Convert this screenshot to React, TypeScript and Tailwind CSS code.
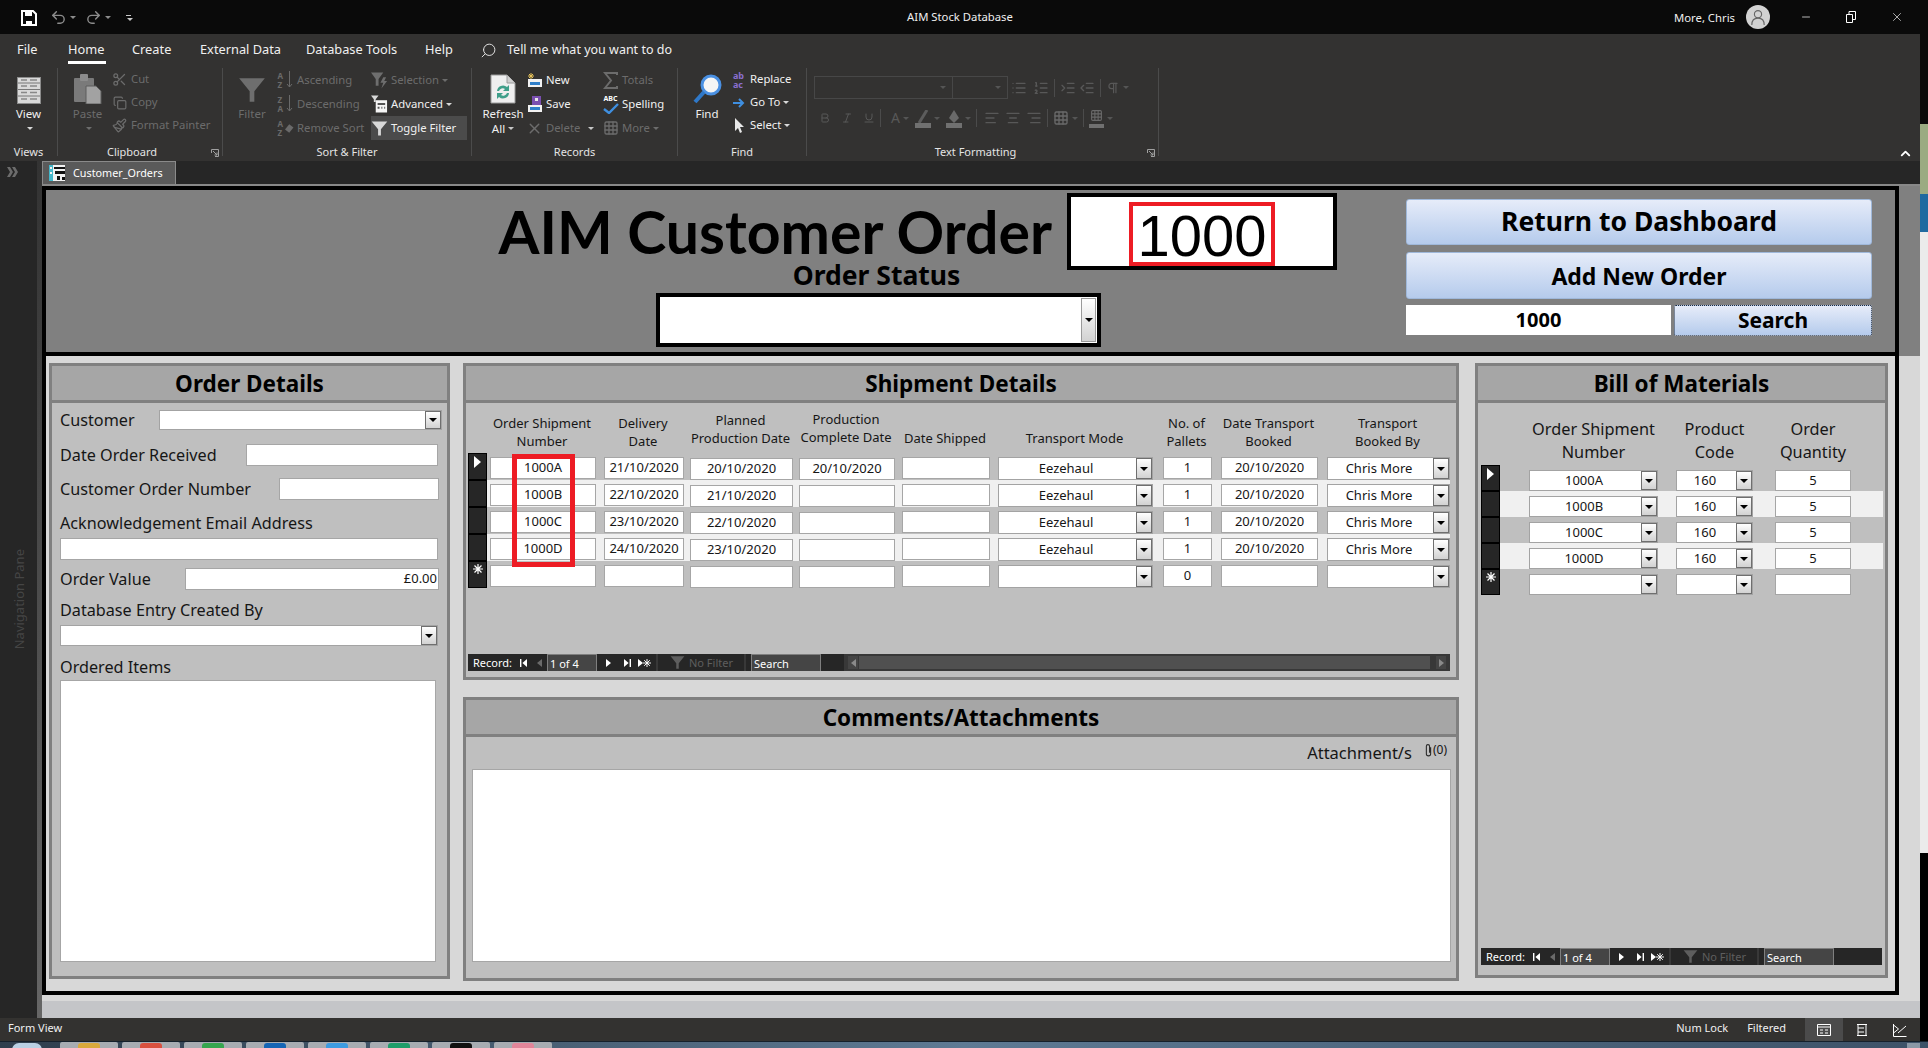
import {
  AlignCenter,
  AlignLeft,
  AlignRight,
  Bold,
  ChevronUp,
  Copy,
  Grid3x3,
  IndentDecrease,
  IndentIncrease,
  Italic,
  List,
  ListOrdered,
  Minus,
  Paintbrush,
  Pilcrow,
  Redo2,
  Scissors,
  Search as SearchIcon,
  Underline,
  Undo2,
  X,
} from 'lucide-react';
import type { ReactNode } from 'react';

// --- DATA ---
const tabs = ['File', 'Home', 'Create', 'External Data', 'Database Tools', 'Help'];

const tabClasses: Record<string, string> = {
  File: 'ml-[17px] w-[51px]',
  Home: 'w-[64px]',
  Create: 'w-[68px]',
  'External Data': 'w-[106px]',
  'Database Tools': 'w-[119px]',
  Help: 'w-[55px]',
};

const shipCols = [
  { head: ['Order Shipment', 'Number'], cls: 'ml-[3px] w-[106px]', pb: 'pb-[3px]' },
  { head: ['Delivery', 'Date'], cls: 'ml-[8px] w-[80px]', pb: 'pb-[3px]' },
  { head: ['Planned', 'Production Date'], cls: 'ml-[6px] w-[103px]', pb: 'pb-[6px]' },
  { head: ['Production', 'Complete Date'], cls: 'ml-[6px] w-[96px]', pb: 'pb-[7px]' },
  { head: ['Date Shipped'], cls: 'ml-[7px] w-[88px]', pb: 'pb-[6px]' },
  { head: ['Transport Mode'], cls: 'ml-[8px] w-[155px]', pb: 'pb-[6px]' },
  { head: ['No. of', 'Pallets'], cls: 'ml-[10px] w-[49px]', pb: 'pb-[3px]' },
  { head: ['Date Transport', 'Booked'], cls: 'ml-[9px] w-[97px]', pb: 'pb-[3px]' },
  { head: ['Transport', 'Booked By'], cls: 'ml-[9px] w-[123px]', pb: 'pb-[3px]' },
];

const shipRows = [
  { id: '1000A', delivery: '21/10/2020', planned: '20/10/2020', complete: '20/10/2020', mode: 'Eezehaul', pallets: '1', booked: '20/10/2020', by: 'Chris More' },
  { id: '1000B', delivery: '22/10/2020', planned: '21/10/2020', complete: '', mode: 'Eezehaul', pallets: '1', booked: '20/10/2020', by: 'Chris More' },
  { id: '1000C', delivery: '23/10/2020', planned: '22/10/2020', complete: '', mode: 'Eezehaul', pallets: '1', booked: '20/10/2020', by: 'Chris More' },
  { id: '1000D', delivery: '24/10/2020', planned: '23/10/2020', complete: '', mode: 'Eezehaul', pallets: '1', booked: '20/10/2020', by: 'Chris More' },
  { id: '', delivery: '', planned: '', complete: '', mode: '', pallets: '0', booked: '', by: '' },
];

const bomRows = [
  { id: '1000A', code: '160', qty: '5' },
  { id: '1000B', code: '160', qty: '5' },
  { id: '1000C', code: '160', qty: '5' },
  { id: '1000D', code: '160', qty: '5' },
  { id: '', code: '', qty: '' },
];

const taskIcons = [
  'bg-[#d9a93c]',
  'bg-[#d9503f]',
  'bg-[#36a64f]',
  'bg-[#1565b5]',
  'bg-[#3d9be0]',
  'bg-[#1f9d6a]',
  'bg-[#111111]',
  'bg-[#e2859a]',
];

// --- SMALL DRAWINGS ---
const Funnel = ({ className, color }: { className: string; color: string }) => (
  <svg viewBox="0 0 24 24" className={className}>
    <path d="M1 2h22L14 13v9h-4v-9z" fill={color} />
  </svg>
);

const Triangle = ({ className = 'fill-black' }: { className?: string }) => (
  <svg viewBox="0 0 8 4" className={`h-[4px] w-[8px] ${className}`}>
    <path d="M0 0h8L4 4z" />
  </svg>
);

const Caret = ({ className = 'fill-[#c8c8c8]' }: { className?: string }) => (
  <svg viewBox="0 0 6 3" className={`ml-[3px] inline h-[3px] w-[6px] shrink-0 ${className}`}>
    <path d="M0 0h6L3 3z" />
  </svg>
);

const StarGlyph = ({ className = 'stroke-white', size = 'h-[10px] w-[10px]' }: { className?: string; size?: string }) => (
  <svg viewBox="0 0 10 10" className={`${size} ${className}`} strokeWidth="1.2">
    <path d="M5 0v10M0 5h10M1.5 1.5l7 7M8.5 1.5l-7 7" />
  </svg>
);

const ViewIcon = () => (
  <svg viewBox="0 0 24 27" className="h-[27px] w-[24px]">
    <rect x="0.5" y="0.5" width="23" height="26" fill="#d9d9d9" stroke="#8c8c8c" />
    {[6, 12.5, 19].map((y) => (
      <path key={y} d={`M1 ${y}h22`} stroke="#777" />
    ))}
    {[3, 9, 15.5, 22].map((y) => (
      <path key={y} d={`M4 ${y}h6M13 ${y}h7`} stroke="#888" strokeWidth="1.5" />
    ))}
  </svg>
);

const PasteIcon = () => (
  <svg viewBox="0 0 29 31" className="h-[31px] w-[29px]">
    <rect x="1" y="5" width="20" height="24" rx="1" fill="#7a7a7a" />
    <rect x="7" y="1" width="8" height="7" rx="1" fill="#8c8c8c" />
    <path d="M13 13h10l5 5v13H13z" fill="#a2a2a2" stroke="#5c5c5c" />
  </svg>
);

const RefreshIcon = () => (
  <svg viewBox="0 0 26 30" className="h-[30px] w-[26px]">
    <path d="M1 1h16l8 8v20H1z" fill="#efefef" stroke="#9a9a9a" />
    <path d="M17 1v8h8" fill="#cfcfcf" stroke="#9a9a9a" />
    <path d="M7 17a6 6 0 0 1 10-4l2-2v6h-6l2-2a4 4 0 0 0-6 2zM19 19a6 6 0 0 1-10 4l-2 2v-6h6l-2 2a4 4 0 0 0 6-2z" fill="#3f9f8a" />
  </svg>
);

const NewIcon = () => (
  <svg viewBox="0 0 16 15" className="h-[15px] w-[16px]">
    <path d="M4 0v6M1 3h6M2 1l4 4M6 1L2 5" stroke="#e8c35a" />
    <rect x="1" y="6" width="14" height="8" fill="#f2f2f2" />
    <rect x="3" y="9" width="10" height="3" fill="#2f7fc9" />
  </svg>
);

const SaveSmallIcon = () => (
  <svg viewBox="0 0 16 17" className="h-[17px] w-[16px]">
    <rect x="5" y="0" width="9" height="11" fill="#7a4fb0" />
    <rect x="8" y="2" width="3" height="3" fill="#e8e8e8" />
    <rect x="1" y="9" width="14" height="7" fill="#f2f2f2" />
    <rect x="3" y="11" width="10" height="3" fill="#2f7fc9" />
  </svg>
);

const SigmaIcon = () => (
  <svg viewBox="0 0 15 17" className="h-[17px] w-[15px] fill-none stroke-[#6c6c6c]" strokeWidth="2">
    <path d="M14 3V1H2l6 7.5L2 16h12v-2" />
  </svg>
);

const SpellingIcon = () => (
  <div className="flex h-[19px] w-[16px] flex-col items-center">
    <span className="text-[7px] leading-[8px] font-bold text-white">ABC</span>
    <svg viewBox="0 0 16 11" className="h-[11px] w-[16px]">
      <path d="M1 6l5 4 9-9" fill="none" stroke="#3f8fe0" strokeWidth="2.4" />
    </svg>
  </div>
);

const FindIcon = () => (
  <svg viewBox="0 0 29 30" className="h-[30px] w-[29px]">
    <circle cx="18" cy="11" r="9" fill="#f5f5f5" stroke="#4a90e2" strokeWidth="3" />
    <path d="M11 18L2 28" stroke="#2f78c8" strokeWidth="4" />
  </svg>
);

const GoToIcon = () => (
  <svg viewBox="0 0 14 12" className="h-[12px] w-[14px]">
    <path d="M1 6h10M7 2l4 4-4 4" fill="none" stroke="#3f8fe0" strokeWidth="2" />
  </svg>
);

const CursorIcon = () => (
  <svg viewBox="0 0 12 16" className="h-[16px] w-[12px]">
    <path d="M2 0v13l3-3 2 5 2-1-2-5h4z" fill="#e8e8e8" />
  </svg>
);

const SelectionIcon = () => (
  <svg viewBox="0 0 18 18" className="h-[18px] w-[18px]">
    <path d="M0 1h13L8 8v7H5V8z" fill="#6e6e6e" />
    <path d="M13 6l-3 6h3l-2 6 6-8h-3l2-4z" fill="#6e6e6e" />
  </svg>
);

const AdvancedIcon = () => (
  <svg viewBox="0 0 18 18" className="h-[18px] w-[18px]">
    <path d="M0 0h8L5 4v3H3V4z" fill="#d8d8d8" />
    <rect x="5" y="5" width="12" height="13" fill="#f5f5f5" />
    <path d="M7 9h8M7 13h2M11 13h1M14 13h1" stroke="#555" strokeWidth="2" />
  </svg>
);

const SortIcon = ({ top, bottom }: { top: string; bottom: string }) => (
  <div className="flex h-[20px] w-[16px] items-center">
    <span className="flex w-[8px] flex-col text-[8px] leading-[9px] font-bold text-[#6a6a6a]">
      <span>{top}</span>
      <span>{bottom}</span>
    </span>
    <svg viewBox="0 0 7 18" className="h-[18px] w-[7px]">
      <path d="M3.5 0v16M1 13l2.5 3L6 13" fill="none" stroke="#6a6a6a" />
    </svg>
  </div>
);

const RemoveSortIcon = () => (
  <div className="flex h-[20px] w-[16px] items-center">
    <span className="flex w-[8px] flex-col text-[8px] leading-[9px] font-bold text-[#6a6a6a]">
      <span>A</span>
      <span>Z</span>
    </span>
    <svg viewBox="0 0 8 8" className="h-[9px] w-[9px]">
      <path d="M0 5l4-5 4 3-4 5z" fill="#6a6a6a" />
    </svg>
  </div>
);

const TabGlyph = () => (
  <svg viewBox="0 0 16 16" className="h-[16px] w-[16px]" shapeRendering="crispEdges">
    <rect width="16" height="16" fill="#f2f2f2" />
    <rect x="0" y="0" width="4" height="16" fill="#43b6c9" />
    <rect x="1" y="2" width="2" height="2" fill="#f2f2f2" />
    <rect x="1" y="7" width="2" height="2" fill="#f2f2f2" />
    <rect x="5" y="2" width="11" height="2" fill="#111" />
    <rect x="6" y="6" width="10" height="3" fill="#111" />
    <rect x="8" y="11" width="3" height="4" fill="#111" />
    <rect x="13" y="12" width="3" height="3" fill="#111" />
  </svg>
);

const NavFirst = ({ last = false }: { last?: boolean }) => (
  <svg viewBox="0 0 8 8" className={`h-[8px] w-[8px] fill-white ${last ? 'rotate-180' : ''}`}>
    <path d="M0 0h1.4v8H0zM7 0v8L2.4 4z" />
  </svg>
);

const NavArrow = ({ left = false, className = 'fill-white' }: { left?: boolean; className?: string }) => (
  <svg viewBox="0 0 5 8" className={`h-[8px] w-[5px] ${className} ${left ? 'rotate-180' : ''}`}>
    <path d="M0 0l5 4-5 4z" />
  </svg>
);

// --- FORM CONTROLS ---
const TextBox = ({ className, value = '', align = 'text-center' }: { className: string; value?: string; align?: string }) => (
  <div className={`flex items-center border border-[#a6a6a6] bg-white pb-[1px] text-[13px] leading-none text-[#161616] ${align} ${className}`}>
    <span className="w-full">{value}</span>
  </div>
);

const DropButton = ({ className }: { className: string }) => (
  <div className={`flex shrink-0 items-center justify-center border border-[#6f6f6f] bg-gradient-to-b from-[#ffffff] to-[#d2d2d2] ${className}`}>
    <Triangle />
  </div>
);

const Combo = ({ className, value = '' }: { className: string; value?: string }) => (
  <div className={`flex bg-[#a3a3a3] p-[1px] text-[13px] text-[#161616] ${className}`}>
    <div className="flex flex-1 items-center justify-center bg-white pr-[3px] pb-[1px] leading-none">{value}</div>
    <DropButton className="w-[16px]" />
  </div>
);

const RecordSelector = ({ kind }: { kind: 'current' | 'new' | 'none' }) => (
  <div className="flex w-[19px] shrink-0 justify-center border border-black bg-[#262626] pt-[2px]">
    {kind === 'current' && (
      <svg viewBox="0 0 7 12" className="h-[12px] w-[7px] fill-white">
        <path d="M0 0l7 6-7 6z" />
      </svg>
    )}
    {kind === 'new' && <StarGlyph />}
  </div>
);

const RecordBar = ({ scroll = false }: { scroll?: boolean }) => (
  <div className={`flex h-[17px] items-center bg-[#262626] pl-[5px] text-[11px] leading-none text-white ${scroll ? 'w-[982px]' : 'w-[401px]'}`}>
    <span className="w-[44px] shrink-0">Record:</span>
    <span className="flex w-[14px] shrink-0 justify-center"><NavFirst /></span>
    <span className="flex w-[16px] shrink-0 justify-center"><NavArrow left className="fill-[#6a6a6a]" /></span>
    <span className="flex h-full w-[50px] shrink-0 items-center border-x border-t border-[#7f7f7f] bg-[#454545] pl-[2px]">1 of 4</span>
    <span className="flex w-[22px] shrink-0 justify-center"><NavArrow /></span>
    <span className="flex w-[16px] shrink-0 justify-center"><NavFirst last /></span>
    <span className="flex w-[18px] shrink-0 items-center justify-center">
      <NavArrow />
      <StarGlyph size="h-[8px] w-[8px]" />
    </span>
    <span className="ml-[3px] flex h-full w-[90px] shrink-0 items-center border-x-2 border-[#383838] pl-[12px] text-[#5e5e5e]">
      <Funnel className="h-[15px] w-[15px] shrink-0" color="#5e5e5e" />
      <span className="ml-[4px]">No Filter</span>
    </span>
    <span className="ml-[5px] flex h-full w-[70px] shrink-0 items-center border-x border-t border-[#7f7f7f] bg-[#454545] pl-[2px]">Search</span>
    {scroll && (
      <div className="ml-[23px] flex h-full flex-1 items-center bg-[#383838] px-[4px]">
        <span className="flex h-[13px] w-[10px] items-center justify-center bg-[#454545]"><NavArrow left className="fill-[#8a8a8a]" /></span>
        <span className="mx-[1px] h-[13px] flex-1 bg-[#505050]" />
        <span className="ml-[5px] flex h-[13px] w-[10px] items-center justify-center bg-[#454545]"><NavArrow className="fill-[#8a8a8a]" /></span>
      </div>
    )}
  </div>
);

const Panel = ({ title, className, children }: { title: string; className: string; children: ReactNode }) => (
  <section className={`flex flex-col border-[3px] border-[#808080] ${className}`}>
    <h2 className="h-[37px] shrink-0 border-b-[3px] border-[#808080] bg-[#a6a6a6] text-center text-[22.5px] leading-[35px] font-bold text-black">
      {title}
    </h2>
    <div className="flex min-h-0 flex-1 flex-col bg-[#bfbfbf]">{children}</div>
  </section>
);

// --- RIBBON ---
const Group = ({ label, className, labelClass = '', launcher = false, children }: { label: string; className: string; labelClass?: string; launcher?: boolean; children: ReactNode }) => (
  <div className={`relative flex h-[88px] shrink-0 flex-col border-r border-[#4b4b4b] ${className}`}>
    <div className="flex h-[72px] shrink-0">{children}</div>
    <div className={`mt-[4px] shrink-0 text-center text-[11px] leading-[16px] text-[#e4e4e4] ${labelClass}`}>{label}</div>
    {launcher && (
      <svg viewBox="0 0 8 8" className="absolute right-[3px] bottom-[-1px] h-[8px] w-[8px] stroke-[#a0a0a0]" fill="none">
        <path d="M.5 4V.5H7.5V7.5H4M2 2l4 4M6 3.5V6H3.5" />
      </svg>
    )}
  </div>
);

const BigButton = ({ icon, label, className, tone = 'text-[#f0f0f0]', extra }: { icon: ReactNode; label: string; className: string; tone?: string; extra?: ReactNode }) => (
  <div className={`flex flex-col items-center pt-[4px] text-[11.5px] leading-[15px] ${tone} ${className}`}>
    <div className="flex h-[32px] items-end">{icon}</div>
    <span className="mt-[2px]">{label}</span>
    {extra}
  </div>
);

const SmallButton = ({ icon, label, className = '', on = false, caret = false, tight = false }: { icon: ReactNode; label: string; className?: string; on?: boolean; caret?: boolean; tight?: boolean }) => (
  <div className={`flex items-center whitespace-nowrap text-[11.3px] ${tight ? 'h-[23px]' : 'h-[24px]'} ${on ? 'text-[#f0f0f0]' : 'text-[#6c6c6c]'} ${className}`}>
    <span className="mr-[3px] flex w-[17px] shrink-0 justify-center">{icon}</span>
    {label}
    {caret && <Caret className={on ? 'fill-[#d8d8d8]' : 'fill-[#6c6c6c]'} />}
  </div>
);

const Sep = () => <span className="mx-[5px] h-[18px] w-px bg-[#4b4b4b]" />;

const Ribbon = () => (
  <div className="h-[127px] shrink-0 bg-[#333231]">
    <div className="flex h-[34px] items-center pb-[2px] text-[12.8px] text-[#f0f0f0]">
      {tabs.map((tab) => (
        <div key={tab} className={`relative ${tabClasses[tab]}`}>
          {tab}
          {tab === 'Home' && <span className="absolute top-[21px] left-0 h-[3px] w-[38px] bg-white" />}
        </div>
      ))}
      <SearchIcon className="h-[17px] w-[17px] -scale-x-100 text-[#e0e0e0]" strokeWidth={1.4} />
      <span className="ml-[10px] text-[12.5px]">Tell me what you want to do</span>
    </div>
    <div className="relative flex">
      <Group label="Views" className="w-[58px]">
        <BigButton
          className="w-full"
          icon={<ViewIcon />}
          label="View"
          extra={<Caret className="mt-[6px] ml-0 fill-[#d8d8d8]" />}
        />
      </Group>
      <Group label="Clipboard" labelClass="pr-[16px]" launcher className="w-[165px]">
        <BigButton
          className="ml-[8px] w-[43px]"
          tone="text-[#6c6c6c]"
          icon={<PasteIcon />}
          label="Paste"
          extra={<Caret className="mt-[6px] ml-0 fill-[#6c6c6c]" />}
        />
        <div className="ml-[2px] flex flex-col">
          <SmallButton tight icon={<Scissors className="h-[15px] w-[15px]" />} label="Cut" />
          <SmallButton tight icon={<Copy className="h-[14px] w-[14px]" />} label="Copy" />
          <SmallButton tight icon={<Paintbrush className="h-[15px] w-[15px]" />} label="Format Painter" />
        </div>
      </Group>
      <Group label="Sort & Filter" className="w-[249px]">
        <BigButton
          className="ml-[12px] w-[34px]"
          tone="text-[#6c6c6c]"
          icon={<Funnel className="h-[28px] w-[28px]" color="#6e6e6e" />}
          label="Filter"
        />
        <div className="ml-[8px] flex w-[94px] flex-col">
          <SmallButton icon={<SortIcon top="A" bottom="Z" />} label="Ascending" />
          <SmallButton icon={<SortIcon top="Z" bottom="A" />} label="Descending" />
          <SmallButton icon={<RemoveSortIcon />} label="Remove Sort" />
        </div>
        <div className="flex flex-col">
          <SmallButton icon={<SelectionIcon />} label="Selection" caret />
          <SmallButton on icon={<AdvancedIcon />} label="Advanced" caret />
          <SmallButton on className="w-[96px] bg-[#4b4b4b]" icon={<Funnel className="h-[17px] w-[17px]" color="#d8d8d8" />} label="Toggle Filter" />
        </div>
      </Group>
      <Group label="Records" className="w-[206px]">
        <BigButton
          className="ml-[11px] w-[40px]"
          icon={<RefreshIcon />}
          label="Refresh"
          extra={<span className="flex items-center">All<Caret /></span>}
        />
        <div className="ml-[3px] flex w-[75px] flex-col">
          <SmallButton on icon={<NewIcon />} label="New" />
          <SmallButton on icon={<SaveSmallIcon />} label="Save" />
          <div className="flex items-center">
            <SmallButton icon={<X className="h-[17px] w-[17px]" />} label="Delete" />
            <Caret className="ml-[8px] fill-[#c8c8c8]" />
          </div>
        </div>
        <div className="ml-[1px] flex flex-col">
          <SmallButton icon={<SigmaIcon />} label="Totals" />
          <SmallButton on icon={<SpellingIcon />} label="Spelling" />
          <SmallButton icon={<Grid3x3 className="h-[16px] w-[16px]" />} label="More" caret />
        </div>
      </Group>
      <Group label="Find" className="w-[129px]">
        <BigButton className="ml-[9px] w-[40px]" icon={<FindIcon />} label="Find" />
        <div className="ml-[3px] flex flex-col">
          <SmallButton tight on icon={<span className="text-[9px] leading-[9px] font-bold text-[#8a6fd0]">ab<br />ac</span>} label="Replace" />
          <SmallButton tight on icon={<GoToIcon />} label="Go To" caret />
          <SmallButton tight on icon={<CursorIcon />} label="Select" caret />
        </div>
      </Group>
      <Group label="Text Formatting" labelClass="pr-[14px]" launcher className="w-[352px]">
        <div className="ml-[7px] flex flex-col text-[#585858]">
          <div className="mt-[8px] flex items-center">
            <span className="flex h-[23px] w-[139px] items-center justify-end border border-[#474747] pr-[6px]"><Caret className="fill-[#555555]" /></span>
            <span className="flex h-[23px] w-[55px] items-center justify-end border-y border-r border-[#474747] pr-[6px]"><Caret className="fill-[#555555]" /></span>
            <List className="ml-[3px] h-[16px] w-[16px]" />
            <ListOrdered className="ml-[6px] h-[16px] w-[16px]" />
            <Sep />
            <IndentIncrease className="h-[16px] w-[16px]" />
            <IndentDecrease className="ml-[3px] h-[16px] w-[16px]" />
            <Sep />
            <Pilcrow className="h-[14px] w-[14px]" />
            <Caret className="fill-[#555555]" />
          </div>
          <div className="mt-[9px] flex items-center">
            <Bold className="ml-[5px] h-[12px] w-[12px]" />
            <Italic className="ml-[10px] h-[12px] w-[12px]" />
            <Underline className="ml-[10px] h-[12px] w-[12px]" />
            <Sep />
            <span className="ml-[5px] text-[14px] leading-none">A</span>
            <Caret className="fill-[#555555]" />
            <span className="ml-[6px] flex h-[20px] w-[16px] flex-col justify-end">
              <svg viewBox="0 0 16 13" className="h-[13px] w-[16px] stroke-[#5c5c5c]"><path d="M4 13L12 0" strokeWidth="3" /></svg>
              <span className="h-[5px] bg-[#707070]" />
            </span>
            <Caret className="fill-[#555555]" />
            <span className="ml-[6px] flex h-[20px] w-[16px] flex-col justify-end">
              <svg viewBox="0 0 16 13" className="h-[13px] w-[16px] fill-[#6a6a6a]"><path d="M8 0l5 8-5 5-5-5z" /></svg>
              <span className="h-[5px] bg-[#707070]" />
            </span>
            <Caret className="fill-[#555555]" />
            <Sep />
            <AlignLeft className="ml-[2px] h-[16px] w-[16px]" />
            <AlignCenter className="ml-[5px] h-[16px] w-[16px]" />
            <AlignRight className="ml-[5px] h-[16px] w-[16px]" />
            <Sep />
            <Grid3x3 className="h-[18px] w-[16px] text-[#6a6a6a]" />
            <Caret className="fill-[#555555]" />
            <Sep />
            <span className="flex h-[20px] w-[15px] flex-col justify-end">
              <Grid3x3 className="h-[13px] w-[15px] text-[#6a6a6a]" />
              <span className="mt-[2px] h-[4px] bg-[#707070]" />
            </span>
            <Caret className="fill-[#555555]" />
          </div>
        </div>
      </Group>
      <ChevronUp className="absolute top-[78px] left-[1898px] h-[15px] w-[15px] text-white" strokeWidth={3} />
    </div>
  </div>
);

// --- FORM SECTIONS ---
const FormHeader = () => (
  <div className="h-[170px] shrink-0 bg-[#808080]">
    <div className="flex h-full w-[1857px] border-4 border-black">
      <div className="flex w-[1291px] flex-col">
        <div className="flex h-[80px] items-start justify-end pt-[3px]">
          <h1 className="mt-[12px] mr-[15px] font-['Lato',sans-serif] text-[59px] leading-[54px] font-bold whitespace-nowrap text-black">AIM Customer Order</h1>
          <div className="flex h-[77px] w-[270px] items-center justify-center border-4 border-black bg-white">
            <span className="mt-[5px] flex h-[64px] w-[146px] items-center justify-center border-4 border-[#ed1c24] pt-[3px] font-['Liberation_Sans',sans-serif] text-[58px] leading-none text-black">
              1000
            </span>
          </div>
        </div>
        <div className="mt-[-10px] ml-[610px] flex w-[445px] flex-col items-center">
          <div className="h-[33px] pr-[4px] text-[26.5px] leading-[30px] font-bold text-black">Order Status</div>
          <div className="flex h-[54px] w-full justify-end border-4 border-black bg-white p-[1px]">
            <DropButton className="w-[15px] border-[#9a9a9a]" />
          </div>
        </div>
      </div>
      <div className="ml-[69px] flex w-[466px] flex-col pt-[9px]">
        <button className="h-[46px] rounded-[3px] border border-[#9fb8da] bg-gradient-to-b from-[#e6ecf9] to-[#b5cbec] text-[26.5px] font-bold text-black">
          Return to Dashboard
        </button>
        <button className="mt-[7px] h-[47px] rounded-[3px] border border-[#9fb8da] bg-gradient-to-b from-[#e6ecf9] to-[#b5cbec] pt-[1px] text-[23px] font-bold text-black">
          Add New Order
        </button>
        <div className="mt-[6px] flex h-[31px]">
          <div className="flex h-[30px] w-[265px] items-center justify-center bg-white text-[20px] font-bold text-black">1000</div>
          <button className="ml-[3px] flex-1 rounded-[2px] border border-dotted border-[#1e2c40] bg-gradient-to-b from-[#e6ecf9] to-[#b5cbec] text-[21px] leading-none font-bold text-black">
            Search
          </button>
        </div>
      </div>
    </div>
  </div>
);

const OrderDetails = () => (
  <Panel title="Order Details" className="h-[616px] w-[401px] shrink-0">
    <div className="text-[16.2px] leading-[20px] text-[#161616]">
      <div className="mt-[7px] flex h-[20px] items-center pl-[8px]">
        <span className="w-[99px]">Customer</span>
        <Combo className="h-[20px] w-[283px]" />
      </div>
      <div className="mt-[14px] flex h-[22px] items-center pl-[8px]">
        <span className="w-[186px]">Date Order Received</span>
        <TextBox className="h-[22px] w-[192px]" />
      </div>
      <div className="mt-[12px] flex h-[22px] items-center pl-[8px]">
        <span className="w-[219px]">Customer Order Number</span>
        <TextBox className="h-[22px] w-[160px]" />
      </div>
      <div className="mt-[13px] pl-[8px]">Acknowledgement Email Address</div>
      <TextBox className="mt-[5px] ml-[8px] h-[22px] w-[378px]" />
      <div className="mt-[8px] flex h-[22px] items-center pl-[8px]">
        <span className="w-[125px]">Order Value</span>
        <TextBox className="h-[22px] w-[254px] pr-[1px]" align="text-right" value="£0.00" />
      </div>
      <div className="mt-[10px] pl-[8px]">Database Entry Created By</div>
      <Combo className="mt-[5px] ml-[8px] h-[21px] w-[378px]" />
      <div className="mt-[11px] pl-[8px]">Ordered Items</div>
      <div className="mt-[3px] ml-[8px] h-[282px] w-[376px] border border-[#a6a6a6] bg-white" />
    </div>
  </Panel>
);

const ShipmentDetails = () => (
  <Panel title="Shipment Details" className="h-[317px] w-[996px]">
    <div className="flex h-[50px] shrink-0 items-end pl-[20px] text-center text-[13px] leading-[18px] text-[#161616]">
      {shipCols.map((col) => (
        <div key={col.head[0]} className={`shrink-0 whitespace-nowrap ${col.cls} ${col.pb}`}>
          {col.head.map((line) => (
            <div key={line}>{line}</div>
          ))}
        </div>
      ))}
    </div>
    <div className="relative flex flex-col pl-[2px]">
      {shipRows.map((row, i) => (
        <div key={i} className="flex h-[27px] w-[982px]">
          <RecordSelector kind={i === 0 ? 'current' : i === 4 ? 'new' : 'none'} />
          <div className={`flex flex-1 pt-[4px] ${i % 2 === 1 ? 'bg-[#f0f0f0]' : ''}`}>
            <TextBox className="ml-[3px] h-[22px] w-[106px]" value={row.id} />
            <TextBox className="ml-[8px] h-[22px] w-[80px]" value={row.delivery} />
            <TextBox className="mt-[1px] ml-[6px] h-[22px] w-[103px]" value={row.planned} />
            <TextBox className="mt-[1px] ml-[6px] h-[22px] w-[96px]" value={row.complete} />
            <TextBox className="ml-[7px] h-[22px] w-[88px]" />
            <Combo className="ml-[8px] h-[23px] w-[155px]" value={row.mode} />
            <TextBox className="ml-[10px] h-[22px] w-[49px]" value={row.pallets} />
            <TextBox className="ml-[9px] h-[22px] w-[97px]" value={row.booked} />
            <Combo className="ml-[9px] h-[23px] w-[123px]" value={row.by} />
          </div>
        </div>
      ))}
      <div className="absolute top-[1px] left-[46px] h-[113px] w-[63px] border-[5px] border-[#ed1c24]" />
    </div>
    <div className="mt-auto mb-[6px] pl-[2px]">
      <RecordBar scroll />
    </div>
  </Panel>
);

const Comments = () => (
  <Panel title="Comments/Attachments" className="mt-[17px] h-[284px] w-[996px]">
    <div className="flex h-[32px] shrink-0 items-center justify-end pr-[9px] text-[16.5px] text-[#161616]">
      Attachment/s
      <svg viewBox="0 0 8 14" className="mt-[-6px] ml-[12px] h-[15px] w-[9px] fill-none stroke-[#2a2a2a]">
        <path d="M6 4v6a2 2 0 0 1-4 0V3a1.3 1.3 0 0 1 3 0v6" />
      </svg>
      <span className="mt-[-6px] text-[12px]">(0)</span>
    </div>
    <div className="ml-[6px] h-[193px] w-[979px] border border-[#a6a6a6] bg-white" />
  </Panel>
);

const BillOfMaterials = () => (
  <Panel title="Bill of Materials" className="ml-[16px] h-[615px] w-[413px] shrink-0">
    <div className="flex h-[62px] shrink-0 pt-[15px] text-center text-[16.3px] leading-[23px] text-[#161616]">
      <div className="ml-[51px] w-[129px] whitespace-nowrap"><div>Order Shipment</div><div>Number</div></div>
      <div className="ml-[18px] w-[77px]"><div>Product</div><div>Code</div></div>
      <div className="ml-[22px] w-[76px]"><div>Order</div><div>Quantity</div></div>
    </div>
    <div className="flex flex-col pl-[3px]">
      {bomRows.map((row, i) => (
        <div key={i} className="flex h-[26px] w-[402px]">
          <RecordSelector kind={i === 0 ? 'current' : i === 4 ? 'new' : 'none'} />
          <div className={`flex flex-1 pt-[5px] ${i % 2 === 1 ? 'bg-[#f0f0f0]' : ''}`}>
            <Combo className="ml-[29px] h-[21px] w-[129px]" value={row.id} />
            <Combo className="ml-[18px] h-[21px] w-[77px]" value={row.code} />
            <TextBox className="ml-[22px] h-[21px] w-[76px]" value={row.qty} />
          </div>
        </div>
      ))}
    </div>
    <div className="mt-auto mb-[10px] pl-[3px]">
      <RecordBar />
    </div>
  </Panel>
);

// --- MAIN COMPONENT ---
export default function App() {
  return (
    <div className="flex h-[1048px] w-[1928px] flex-col overflow-hidden bg-black font-['Noto_Sans',sans-serif]">
      <div className="flex h-[1041px]">
        <div className="flex w-[1920px] flex-col">
          {/* title bar */}
          <div className="relative flex h-[34px] shrink-0 items-center justify-center bg-[#0a0a0a] text-[11.3px] text-[#efefef]">
            <div className="absolute top-[9px] left-[21px] flex items-center">
              <svg viewBox="0 0 16 16" className="h-[16px] w-[16px]">
                <path d="M1 1h11l3 3v11H1z" fill="none" stroke="#fff" strokeWidth="2" />
                <path d="M4 1h7v5H4zM5 11h6v4H5z" fill="#fff" />
              </svg>
              <Undo2 className="ml-[13px] h-[17px] w-[17px] text-[#8c8c8c]" />
              <Caret className="fill-[#8c8c8c]" />
              <Redo2 className="ml-[9px] h-[17px] w-[17px] text-[#8c8c8c]" />
              <Caret className="fill-[#8c8c8c]" />
              <span className="ml-[13px] flex flex-col items-center gap-[2px]">
                <span className="h-px w-[5px] bg-[#c8c8c8]" />
                <Caret className="ml-0 fill-[#c8c8c8]" />
              </span>
            </div>
            AIM Stock Database
            <div className="absolute top-0 right-0 flex h-full items-center">
              <span className="mt-[2px]">More, Chris</span>
              <span className="ml-[11px] flex h-[24px] w-[24px] items-center justify-center rounded-full bg-[#d2d2d2]">
                <svg viewBox="0 0 16 16" className="h-[18px] w-[18px] fill-none stroke-[#666]">
                  <circle cx="8" cy="5.5" r="3.2" />
                  <path d="M2.5 15c0-4 2.500-6 5.500-6s5.500 2 5.500 6" />
                </svg>
              </span>
              <Minus className="ml-[30px] h-[12px] w-[12px]" strokeWidth={1.5} />
              <svg viewBox="0 0 10 12" className="ml-[34px] h-[12px] w-[10px] fill-none stroke-white">
                <path d="M.5 3.5h6v8h-6zM3 3.5V.5h6.500v8H6.500" />
              </svg>
              <X className="mr-[16px] ml-[34px] h-[14px] w-[14px]" strokeWidth={1.2} />
            </div>
          </div>

          <Ribbon />

          {/* content */}
          <div className="flex min-h-0 flex-1">
            <div className="relative w-[37px] shrink-0 bg-[#262626]">
              <svg viewBox="0 0 11 10" className="absolute top-[6px] left-[7px] h-[10px] w-[11px] fill-[#6c6c6c]">
                <path d="M0 0h3l3 5-3 5H0l3-5zM5 0h3l3 5-3 5H5l3-5z" />
              </svg>
              <span className="absolute top-[388px] left-[10px] rotate-180 text-[13px] whitespace-nowrap text-[#454545] [writing-mode:vertical-rl]">
                Navigation Pane
              </span>
            </div>
            <div className="w-[5px] shrink-0 bg-gradient-to-b from-[#333333] to-[#666666]" />
            <div className="flex min-w-0 flex-1 flex-col">
              {/* object tabs */}
              <div className="flex h-[25px] shrink-0 border-b-2 border-[#888888] bg-[#262626]">
                <div className="flex h-[23px] w-[134px] items-center border-x border-t border-[#8a8a8a] bg-[#5a5a5a] pl-[6px] text-[10.8px] text-white">
                  <TabGlyph />
                  <span className="ml-[8px]">Customer_Orders</span>
                </div>
              </div>
              <FormHeader />
              {/* detail section */}
              <div className="h-[645px] shrink-0 bg-[#d8d8d8]">
                <div className="flex h-[639px] w-[1857px] border-x-4 border-b-4 border-black pt-[7px] pl-[3px]">
                  <OrderDetails />
                  <div className="ml-[13px] flex w-[996px] shrink-0 flex-col">
                    <ShipmentDetails />
                    <Comments />
                  </div>
                  <BillOfMaterials />
                </div>
              </div>
              <div className="min-h-0 flex-1 bg-[#c4c5c8]" />
            </div>
          </div>

          {/* status bar */}
          <div className="flex h-[23px] shrink-0 items-center bg-[#333230] pl-[8px] text-[11px] text-[#f0f0f0]">
            <span className="mb-[3px]">Form View</span>
            <span className="mb-[3px] ml-auto">Num Lock</span>
            <span className="mb-[3px] ml-[19px]">Filtered</span>
            <span className="ml-[19px] flex h-full w-[38px] items-center justify-center bg-[#4b4b4b]">
              <svg viewBox="0 0 14 14" className="h-[14px] w-[14px] fill-none stroke-white">
                <path d="M.5 1.5h13v11H.5zM.5 4h13M3 7h3M8 7h3M3 10h3M8 10h3" />
              </svg>
            </span>
            <span className="flex h-full w-[38px] items-center justify-center">
              <svg viewBox="0 0 14 14" className="h-[14px] w-[14px] fill-none stroke-white">
                <path d="M2 1.5h10M2 12.5h10M3 1.5v11M11 1.5v11M3 5h6M3 9h6" />
              </svg>
            </span>
            <span className="mr-[1px] flex h-full w-[38px] items-center justify-center">
              <svg viewBox="0 0 14 14" className="h-[14px] w-[14px] fill-none stroke-white">
                <path d="M.5 1v12.5h13M.5 10l5-4-5-4M5 10l8-7" />
              </svg>
            </span>
          </div>
        </div>

        {/* desktop behind the window */}
        <div className="flex w-[8px] flex-col">
          <div className="h-[124px] bg-[#0a0a0a]" />
          <div className="h-[70px] bg-[#9aab82]" />
          <div className="h-[38px] bg-[#1f6aa0]" />
          <div className="h-[621px] bg-[#ebebeb]" />
          <div className="flex-1 bg-black" />
        </div>
      </div>

      {/* taskbar */}
      <div className="flex h-[7px] shrink-0 items-start border-t border-[#15202b] bg-gradient-to-r from-[#2f3e4d] via-[#5e7a94] to-[#3d5268]">
        <span className="mt-[1px] ml-[12px] h-[14px] w-[30px] rounded-full bg-[#b9d0e4]" />
        <div className="ml-[18px] flex gap-[4px]">
          {taskIcons.map((color) => (
            <div key={color} className="flex h-[6px] w-[58px] justify-center rounded-t-[2px] bg-[#a7acb2] pt-[1px]">
              <span className={`h-[5px] w-[22px] rounded-t-[3px] ${color}`} />
            </div>
          ))}
        </div>
        <span className="mt-[1px] mr-[8px] ml-auto h-[6px] w-[13px] bg-[#8a98a6]" />
      </div>
    </div>
  );
}
